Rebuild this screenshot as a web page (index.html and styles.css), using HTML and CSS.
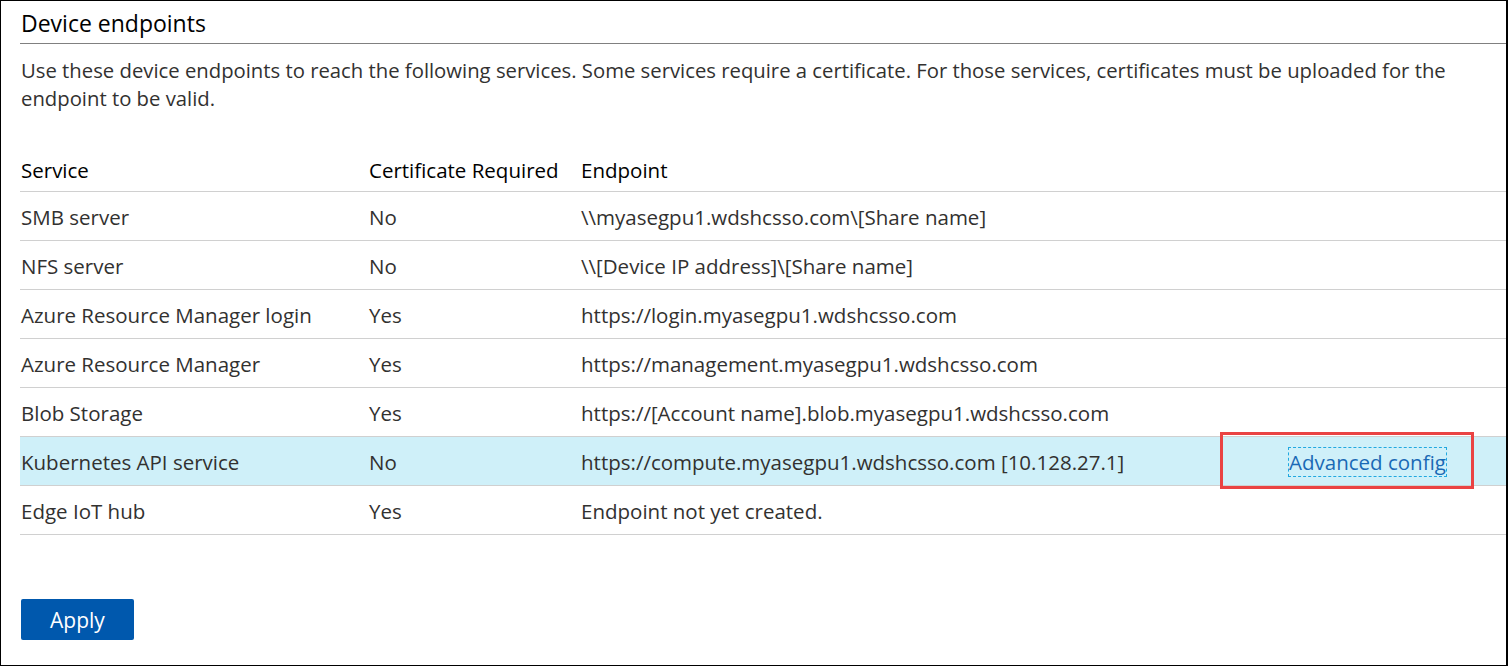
FILE: index.html
```html
<!DOCTYPE html>
<html lang="en">
<head>
<meta charset="utf-8">
<title>Device endpoints</title>
<link rel="stylesheet" href="styles.css">
</head>
<body>
<div class="frame">
  <h1 class="title">Device endpoints</h1>
  <p class="desc">Use these device endpoints to reach the following services. Some services require a certificate. For those services, certificates must be uploaded for the endpoint to be valid.</p>
  <div class="table">
    <div class="row head">
      <div class="cell">Service</div>
      <div class="cell">Certificate Required</div>
      <div class="cell">Endpoint</div>
      <div class="cell"></div>
    </div>
    <div class="row">
      <div class="cell">SMB server</div>
      <div class="cell">No</div>
      <div class="cell">\\myasegpu1.wdshcsso.com\[Share name]</div>
      <div class="cell"></div>
    </div>
    <div class="row">
      <div class="cell">NFS server</div>
      <div class="cell">No</div>
      <div class="cell">\\[Device IP address]\[Share name]</div>
      <div class="cell"></div>
    </div>
    <div class="row">
      <div class="cell">Azure Resource Manager login</div>
      <div class="cell">Yes</div>
      <div class="cell">https://login.myasegpu1.wdshcsso.com</div>
      <div class="cell"></div>
    </div>
    <div class="row">
      <div class="cell">Azure Resource Manager</div>
      <div class="cell">Yes</div>
      <div class="cell">https://management.myasegpu1.wdshcsso.com</div>
      <div class="cell"></div>
    </div>
    <div class="row">
      <div class="cell">Blob Storage</div>
      <div class="cell">Yes</div>
      <div class="cell">https://[Account name].blob.myasegpu1.wdshcsso.com</div>
      <div class="cell"></div>
    </div>
    <div class="row selected">
      <div class="cell">Kubernetes API service</div>
      <div class="cell">No</div>
      <div class="cell">https://compute.myasegpu1.wdshcsso.com [10.128.27.1]</div>
      <div class="cell link-cell">
        <a class="link" href="#">Advanced config</a>
        <span class="callout"></span>
      </div>
    </div>
    <div class="row">
      <div class="cell">Edge IoT hub</div>
      <div class="cell">Yes</div>
      <div class="cell">Endpoint not yet created.</div>
      <div class="cell"></div>
    </div>
  </div>
  <button class="apply" type="button">Apply</button>
</div>
</body>
</html>
```

FILE: styles.css
```css
html, body {
  margin: 0;
  padding: 0;
  background: #fff;
}

.frame {
  box-sizing: border-box;
  width: 1508px;
  height: 666px;
  border: 1px solid #000;
  border-right-width: 2px;
  padding-left: 19px;
  font-family: "Open Sans", "Noto Sans", "Liberation Sans", sans-serif;
  color: #323130;
  overflow: hidden;
}

.title {
  margin: 8px 0 0 0;
  padding: 0 0 6px 1px;
  font-size: 23px;
  font-weight: 400;
  line-height: 28px;
  color: #000;
  border-bottom: 1px solid #808080;
}

.desc {
  margin: 12px 0 0 0;
  padding: 0 20px 0 1px;
  font-size: 20.3px;
  line-height: 28px;
}

.table {
  margin-top: 31px;
}

.row {
  display: grid;
  grid-template-columns: 348px 212px 709px 1fr;
  height: 48px;
  border-bottom: 1px solid #d0d0d0;
  align-items: center;
  font-size: 20.5px;
}

.row.head {
  color: #000;
  padding-top: 5px;
  height: 43px;
}

.row.selected {
  background: #cff0f9;
}

.cell {
  padding-left: 1px;
  padding-top: 1px;
  white-space: nowrap;
}

.link-cell {
  position: relative;
  align-self: stretch;
  display: flex;
  align-items: center;
  padding-left: 0;
}

.link {
  color: #1a69b5;
  text-decoration: none;
  outline: 1px dashed #21a8e0;
  outline-offset: 0;
  display: inline-block;
  line-height: 28px;
}

.callout {
  position: absolute;
  left: -69px;
  top: -5px;
  width: 248px;
  height: 51px;
  border: 3px solid #ea4343;
}

.apply {
  display: block;
  margin: 64px 0 0 1px;
  width: 113px;
  height: 41px;
  border: none;
  border-radius: 2px;
  background: #0058ad;
  color: #fff;
  font-family: "Open Sans", "Noto Sans", "Liberation Sans", sans-serif;
  font-size: 21px;
  padding: 0;
}
```
